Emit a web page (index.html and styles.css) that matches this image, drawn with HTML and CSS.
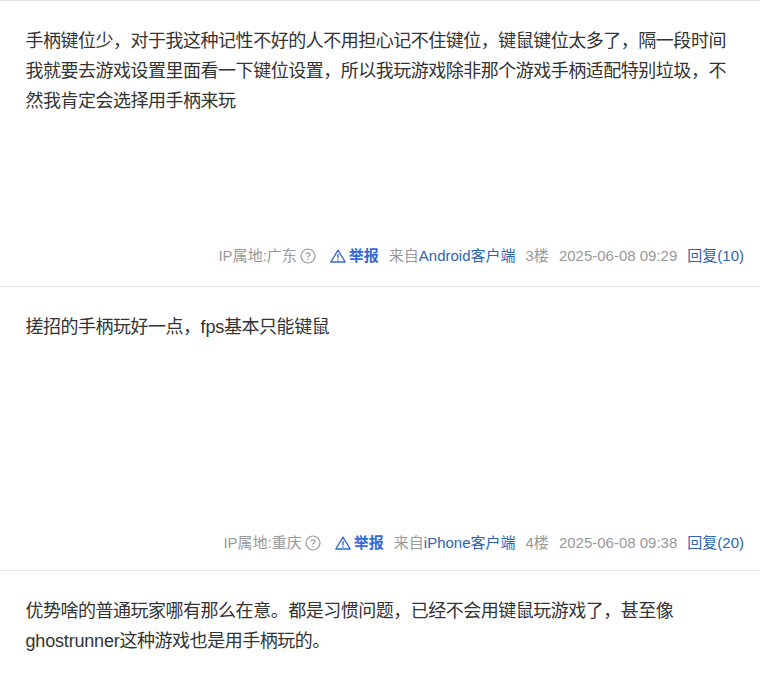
FILE: index.html
```
<!DOCTYPE html>
<html lang="zh">

<head>
    <meta charset="utf-8">
    <meta name="viewport" content="width=device-width, initial-scale=1.0">
    <title>手柄键位</title>
    <link rel="stylesheet" href="styles.css">
</head>

<body>
    <main class="post-list">
        <article class="post">
            <p class="content">手柄键位少，对于我这种记性不好的人不用担心记不住键位，键鼠键位太多了，隔一段时间我就要去游戏设置里面看一下键位设置，所以我玩游戏除非那个游戏手柄适配特别垃圾，不然我肯定会选择用手柄来玩</p>
            <footer class="tail">
                <span class="ip">IP属地:广东</span>
                <svg class="help" viewBox="0 0 16 16"><circle cx="8" cy="8" r="7" /><path d="M6 6.6C6 4.3 10 4.3 10 6.5C10 7.9 8 7.8 8 9.6M8 10.7v1.3" /></svg>
                <a class="report" href="#"><svg class="warn" viewBox="0 0 16 14"><path d="M8 1.2 15.2 13H.8ZM8 5v4.2M8 10.2v1.4" /></svg>举报</a>
                <span class="from">来自<a href="#">Android客户端</a></span>
                <span class="floor">3楼</span>
                <span class="time">2025-06-08 09:29</span>
                <a class="reply" href="#">回复(10)</a>
            </footer>
        </article>
        <article class="post">
            <p class="content">搓招的手柄玩好一点，<span class="latin">fps</span>基本只能键鼠</p>
            <footer class="tail">
                <span class="ip">IP属地:重庆</span>
                <svg class="help" viewBox="0 0 16 16"><circle cx="8" cy="8" r="7" /><path d="M6 6.6C6 4.3 10 4.3 10 6.5C10 7.9 8 7.8 8 9.6M8 10.7v1.3" /></svg>
                <a class="report" href="#"><svg class="warn" viewBox="0 0 16 14"><path d="M8 1.2 15.2 13H.8ZM8 5v4.2M8 10.2v1.4" /></svg>举报</a>
                <span class="from">来自<a href="#">iPhone客户端</a></span>
                <span class="floor">4楼</span>
                <span class="time">2025-06-08 09:38</span>
                <a class="reply" href="#">回复(20)</a>
            </footer>
        </article>
        <article class="post">
            <p class="content">优势啥的普通玩家哪有那么在意。都是习惯问题，已经不会用键鼠玩游戏了，甚至像<span class="latin">ghostrunner</span>这种游戏也是用手柄玩的。</p>
        </article>
    </main>
</body>

</html>
```

FILE: styles.css
```
* {
    margin: 0;
    padding: 0;
    box-sizing: border-box;
}

body {
    background: #fff;
    color: #333;
    font-family: "Liberation Sans", "Noto Sans CJK SC", sans-serif;
}

a {
    color: #2d64b3;
    text-decoration: none;
}

.post-list {
    height: 677px;
    overflow: hidden;
}

.post {
    display: flex;
    flex-direction: column;
    justify-content: space-between;
    height: 286px;
    padding: 25px 16px 18px 25.5px;
    border-top: 1px solid #e1e4e6;
}

.post + .post {
    height: 284px;
    padding-bottom: 15px;
}

.content {
    width: 702px;
    font-size: 18px;
    letter-spacing: -0.49px;
    line-height: 30px;
}

.latin {
    letter-spacing: -0.18px;
}

.tail {
    display: flex;
    justify-content: flex-end;
    align-items: center;
    height: 24px;
    font-size: 15px;
    line-height: 24px;
    color: #999;
    white-space: nowrap;
}

.help {
    width: 16px;
    height: 16px;
    margin-left: 3px;
    fill: none;
    stroke: #999;
    stroke-width: 1.2;
}

.report {
    display: flex;
    align-items: center;
    margin-left: 14px;
    font-weight: bold;
    color: #3569d5;
}

.warn {
    width: 16px;
    height: 14px;
    margin-right: 3px;
    fill: none;
    stroke: #3569d5;
    stroke-width: 1.4;
    stroke-linejoin: round;
}

.from,
.floor,
.time,
.reply {
    margin-left: 10px;
}
```
